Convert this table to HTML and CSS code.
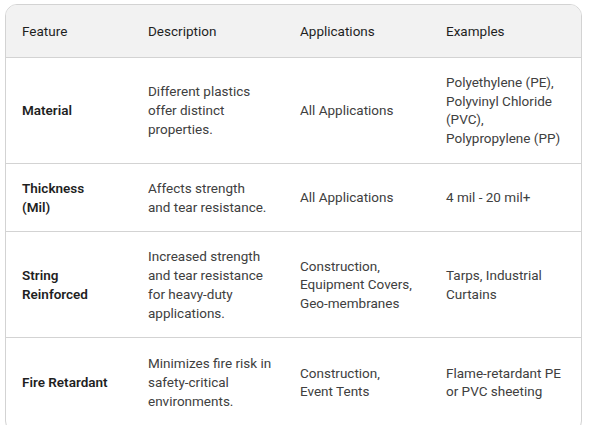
FILE: index.html
```html
<!DOCTYPE html>
<html lang="en">
<head>
<meta charset="utf-8">
<title>Plastic Sheeting Features</title>
<link rel="stylesheet" href="styles.css">
</head>
<body>
<div class="table-wrap">
  <table class="data-table">
    <colgroup>
      <col class="c1"><col class="c2"><col class="c3"><col class="c4">
    </colgroup>
    <thead>
      <tr>
        <th>Feature</th>
        <th>Description</th>
        <th>Applications</th>
        <th>Examples</th>
      </tr>
    </thead>
    <tbody>
      <tr>
        <td class="feat">Material</td>
        <td>Different plastics offer distinct properties.</td>
        <td>All Applications</td>
        <td>Polyethylene (PE), Polyvinyl Chloride (PVC), Polypropylene (PP)</td>
      </tr>
      <tr>
        <td class="feat">Thickness<br>(Mil)</td>
        <td>Affects strength<br>and tear resistance.</td>
        <td>All Applications</td>
        <td>4 mil - 20 mil+</td>
      </tr>
      <tr>
        <td class="feat">String Reinforced</td>
        <td>Increased strength and tear resistance for heavy-duty applications.</td>
        <td>Construction, Equipment Covers, Geo-membranes</td>
        <td>Tarps, Industrial Curtains</td>
      </tr>
      <tr class="last">
        <td class="feat">Fire Retardant</td>
        <td>Minimizes fire risk in safety-critical environments.</td>
        <td>Construction,<br>Event Tents</td>
        <td>Flame-retardant PE or PVC sheeting</td>
      </tr>
    </tbody>
  </table>
</div>
</body>
</html>
```

FILE: styles.css
```css
html, body {
  margin: 0;
  padding: 0;
  background: #ffffff;
}

body {
  font-family: Roboto, "Liberation Sans", Arial, sans-serif;
  font-size: 13.5px;
  color: #1f1f1f;
}

.table-wrap {
  margin: 4px 0 0 5px;
  width: 577px;
  box-sizing: border-box;
  border: 1px solid #d3d3d3;
  border-radius: 12px;
  overflow: hidden;
}

.data-table {
  width: 575px;
  table-layout: fixed;
  border-collapse: collapse;
}

.c1 { width: 126px; }
.c2 { width: 152px; }
.c3 { width: 146px; }
.c4 { width: 151px; }

.data-table th {
  background: #f2f2f2;
  font-weight: 400;
  text-align: left;
  line-height: 18.75px;
  padding: 16.5px 16px;
  border-bottom: 1px solid #d3d3d3;
  color: #1f1f1f;
}

.data-table td {
  line-height: 18.75px;
  padding: 15px 12px 15px 16px;
  vertical-align: middle;
  border-bottom: 1px solid #d3d3d3;
  color: #404040;
}

.data-table .last td {
  padding-top: 16px;
  padding-bottom: 20px;
}

.data-table td.feat {
  font-weight: 600;
  color: #1f1f1f;
}
```
